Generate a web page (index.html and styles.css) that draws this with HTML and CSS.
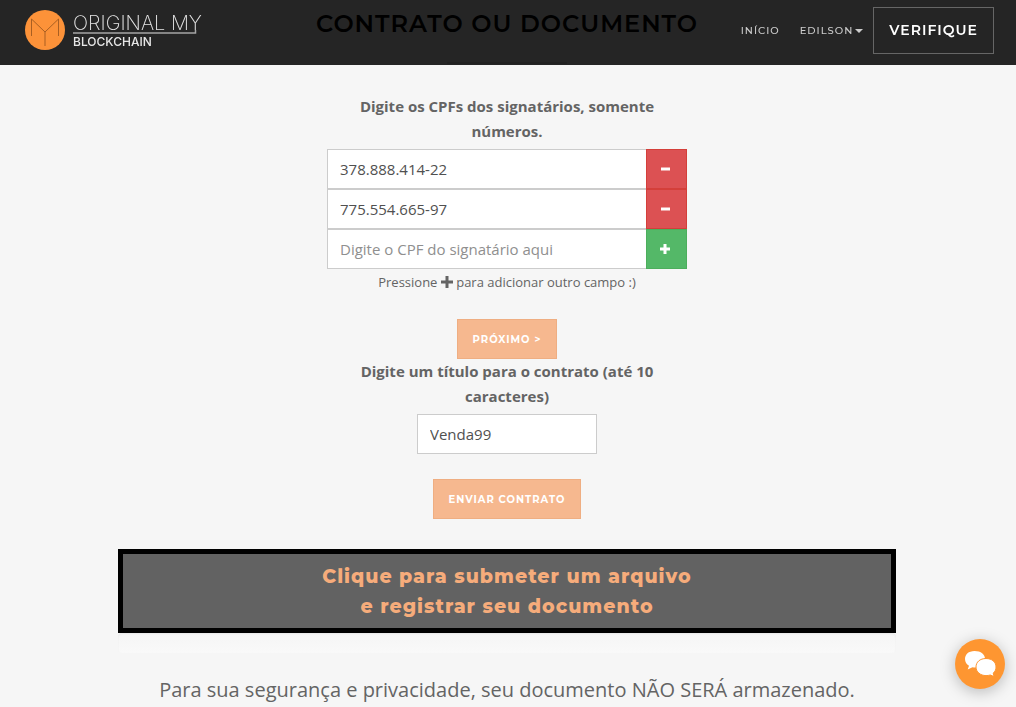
FILE: index.html
```html
<!DOCTYPE html>
<html lang="pt-BR">
<head>
<meta charset="utf-8">
<meta name="viewport" content="width=device-width, initial-scale=1">
<title>Original My Blockchain</title>
<link rel="stylesheet" href="styles.css">
</head>
<body>
<header class="navbar">
  <a class="brand" href="#">
    <svg class="brand-mark" viewBox="0 0 40 40" aria-hidden="true">
      <circle cx="20" cy="20" r="20" fill="#fc9239"/>
      <path d="M6.500 26V9L20 22L33.500 9V26M20 22V36" fill="none" stroke="#a95f22" stroke-width="1"/>
    </svg>
    <svg class="brand-name" viewBox="0 0 134 40" role="img" aria-label="Original My Blockchain">
      <text class="brand-title" x="0" y="20">ORIGINAL MY</text>
      <path d="M0 23H122.500V20" fill="none" stroke="#a5a5a5" stroke-width="1.500"/>
      <text class="brand-sub" x="0" y="36">BLOCKCHAIN</text>
    </svg>
  </a>
  <nav class="menu">
    <a class="menu-link" href="#">INÍCIO</a>
    <a class="menu-link" href="#">EDILSON<span class="caret"></span></a>
    <a class="verify" href="#">VERIFIQUE</a>
  </nav>
</header>

<main class="page">
  <h1 class="page-title">CONTRATO OU DOCUMENTO</h1>
  <hr class="rule">

  <form class="form">
    <label class="label" for="cpf1">Digite os CPFs dos signatários, somente números.</label>
    <div class="group">
      <input class="field" id="cpf1" type="text" value="378.888.414-22">
      <button class="addon remove" type="button" aria-label="Remover">
        <svg class="icon" viewBox="0 0 12 12"><path d="M2 4.500h9v3H2z"/></svg>
      </button>
    </div>
    <div class="group">
      <input class="field" type="text" value="775.554.665-97" aria-label="CPF do segundo signatário">
      <button class="addon remove" type="button" aria-label="Remover">
        <svg class="icon" viewBox="0 0 12 12"><path d="M2 4.500h9v3H2z"/></svg>
      </button>
    </div>
    <div class="group">
      <input class="field" type="text" placeholder="Digite o CPF do signatário aqui" aria-label="CPF do signatário">
      <button class="addon add" type="button" aria-label="Adicionar">
        <svg class="icon" viewBox="0 0 12 12"><path d="M4.500 1h3v3.500H11v3H7.500V11h-3V7.500H1v-3h3.500z"/></svg>
      </button>
    </div>
    <p class="help">Pressione <svg class="icon" viewBox="0 0 12 12" aria-label="mais"><path d="M4.500 0h3v4.500H12v3H7.500V12h-3V7.500H0v-3h4.500z"/></svg> para adicionar outro campo :)</p>
    <button class="btn" type="button">PRÓXIMO &gt;</button>

    <label class="label" for="titulo">Digite um título para o contrato (até 10 caracteres)</label>
    <input class="field title-field" id="titulo" type="text" maxlength="10" value="Venda99">
    <button class="btn send" type="button">ENVIAR CONTRATO</button>
  </form>

  <button class="dropzone" type="button">Clique para submeter um arquivo<br>e registrar seu documento</button>
  <div class="progress"></div>
  <p class="privacy">Para sua segurança e privacidade, seu documento NÃO SERÁ armazenado.</p>
</main>

<button class="chat" type="button" aria-label="Abrir conversa">
  <svg class="chat-icon" viewBox="0 0 50 50" aria-hidden="true">
    <path d="M19.500 12C13.500 12 10 15.600 10 20c0 3 1.500 5.300 4 6.700L12.700 30.500L17.500 28.200C26 29.500 30 25 30 20C30 15.500 26 12 19.500 12z" fill="#fff"/>
    <path d="M31 19.500C25 19.500 21 23 21 28c0 5 4.500 8.600 10 8.600c1.600 0 3-.2 4.300-.6L39 37.600L38.200 34C40.200 32.500 41 30.500 41 28C41 23 37 19.500 31 19.500z" fill="#fff" stroke="#fe9631" stroke-width="1"/>
  </svg>
</button>
</body>
</html>
```
FILE: styles.css
```css
* {
  box-sizing: border-box;
}

body {
  margin: 0;
  background: #f6f6f6;
  color: #646464;
  font-family: "Open Sans", "Noto Sans", sans-serif;
  font-size: 15px;
  line-height: 25px;
}

button,
input {
  font: inherit;
  border-radius: 0;
}

.navbar {
  position: fixed;
  z-index: 2;
  top: 0;
  left: 0;
  right: 0;
  display: flex;
  justify-content: space-between;
  align-items: flex-start;
  height: 65px;
  padding: 7px 22px 0 25px;
  background: rgba(0, 0, 0, 0.85);
}

.brand {
  display: flex;
  gap: 8px;
  padding-top: 3px;
}

.brand-mark {
  width: 40px;
  height: 40px;
}

.brand-name {
  width: 134px;
  height: 40px;
  fill: #e6e6e6;
  font-family: Inter, "Liberation Sans", sans-serif;
}

.brand-title {
  font-size: 20px;
  font-weight: 200;
}

.brand-sub {
  font-size: 12px;
  font-weight: 500;
}

.menu {
  display: flex;
  align-items: center;
  gap: 20px;
  font-family: Montserrat, Inter, sans-serif;
  letter-spacing: 1px;
}

.menu-link {
  display: flex;
  align-items: center;
  gap: 2px;
  color: #ccc;
  font-size: 10px;
  font-weight: 500;
  text-decoration: none;
}

.caret {
  border: 4px solid transparent;
  border-top-color: #ccc;
  border-bottom: 0;
}

.verify {
  margin-left: -10px;
  padding: 10px 15px;
  border: 1px solid #666;
  color: #fff;
  font-size: 14px;
  font-weight: 600;
  text-decoration: none;
}

.page {
  padding: 8px 120px 0 118px;
  text-align: center;
}

.page-title {
  margin: 0;
  color: #000;
  font-family: Montserrat, Inter, sans-serif;
  font-size: 24px;
  font-weight: 600;
  line-height: 32px;
  letter-spacing: 1px;
}

.rule {
  width: 120px;
  height: 2px;
  margin: 22px auto 30px;
  border: 0;
  background: #ddd;
}

.form {
  display: flex;
  flex-direction: column;
  align-items: center;
  width: 360px;
  max-width: 100%;
  margin: 0 auto 30px;
}

.label {
  margin-bottom: 5px;
  font-weight: 700;
}

.group {
  display: flex;
  width: 100%;
}

.field {
  flex: 1;
  min-width: 0;
  height: 40px;
  padding: 6px 12px;
  border: 1px solid #ccc;
  background: #fff;
  color: #505050;
}

.field::placeholder {
  color: #8f8f8f;
  opacity: 1;
}

.group .field {
  border-right: 0;
}

.addon {
  display: flex;
  align-items: center;
  justify-content: center;
  width: 41px;
  padding: 0 3px 0 0;
  border: 1px solid;
}

.remove {
  border-color: #d43f3a;
  background: #dc5153;
}

.add {
  border-color: #4cae5c;
  background: #54b868;
}

.icon {
  width: 12px;
  height: 12px;
  fill: currentColor;
}

.addon .icon {
  fill: #fff;
}

.help {
  margin: 1px 0 24px;
  font-size: 13px;
}

.help .icon {
  vertical-align: -1px;
}

.btn {
  height: 40px;
  padding: 0 15px;
  border: 1px solid #efae82;
  background: #f6b88f;
  color: #fff;
  font-family: Montserrat, Inter, sans-serif;
  font-size: 10px;
  font-weight: 700;
  letter-spacing: 1px;
}

.title-field {
  flex: none;
  width: 180px;
  margin-bottom: 25px;
}

.dropzone {
  display: block;
  width: 100%;
  padding: 8px 7px 6px;
  border: 5px solid #000;
  background: #626262;
  color: #f6ac7b;
  font-family: Montserrat, Inter, sans-serif;
  font-size: 19px;
  font-weight: 800;
  line-height: 30px;
  letter-spacing: 1px;
}

.progress {
  height: 20px;
  border-radius: 4px;
  background: linear-gradient(#f5f5f5, #f9f9f9);
  box-shadow: inset 0 1px 2px rgba(0, 0, 0, 0.06);
}

.privacy {
  margin: 22px 0 0;
  font-size: 20px;
  line-height: 30px;
}

.chat {
  position: fixed;
  right: 11px;
  bottom: 18px;
  width: 50px;
  height: 50px;
  padding: 0;
  border: 0;
  border-radius: 50%;
  background: #fe9631;
  box-shadow: 0 3px 15px rgba(0, 0, 0, 0.25);
}

.chat-icon {
  display: block;
  width: 50px;
  height: 50px;
}
```
